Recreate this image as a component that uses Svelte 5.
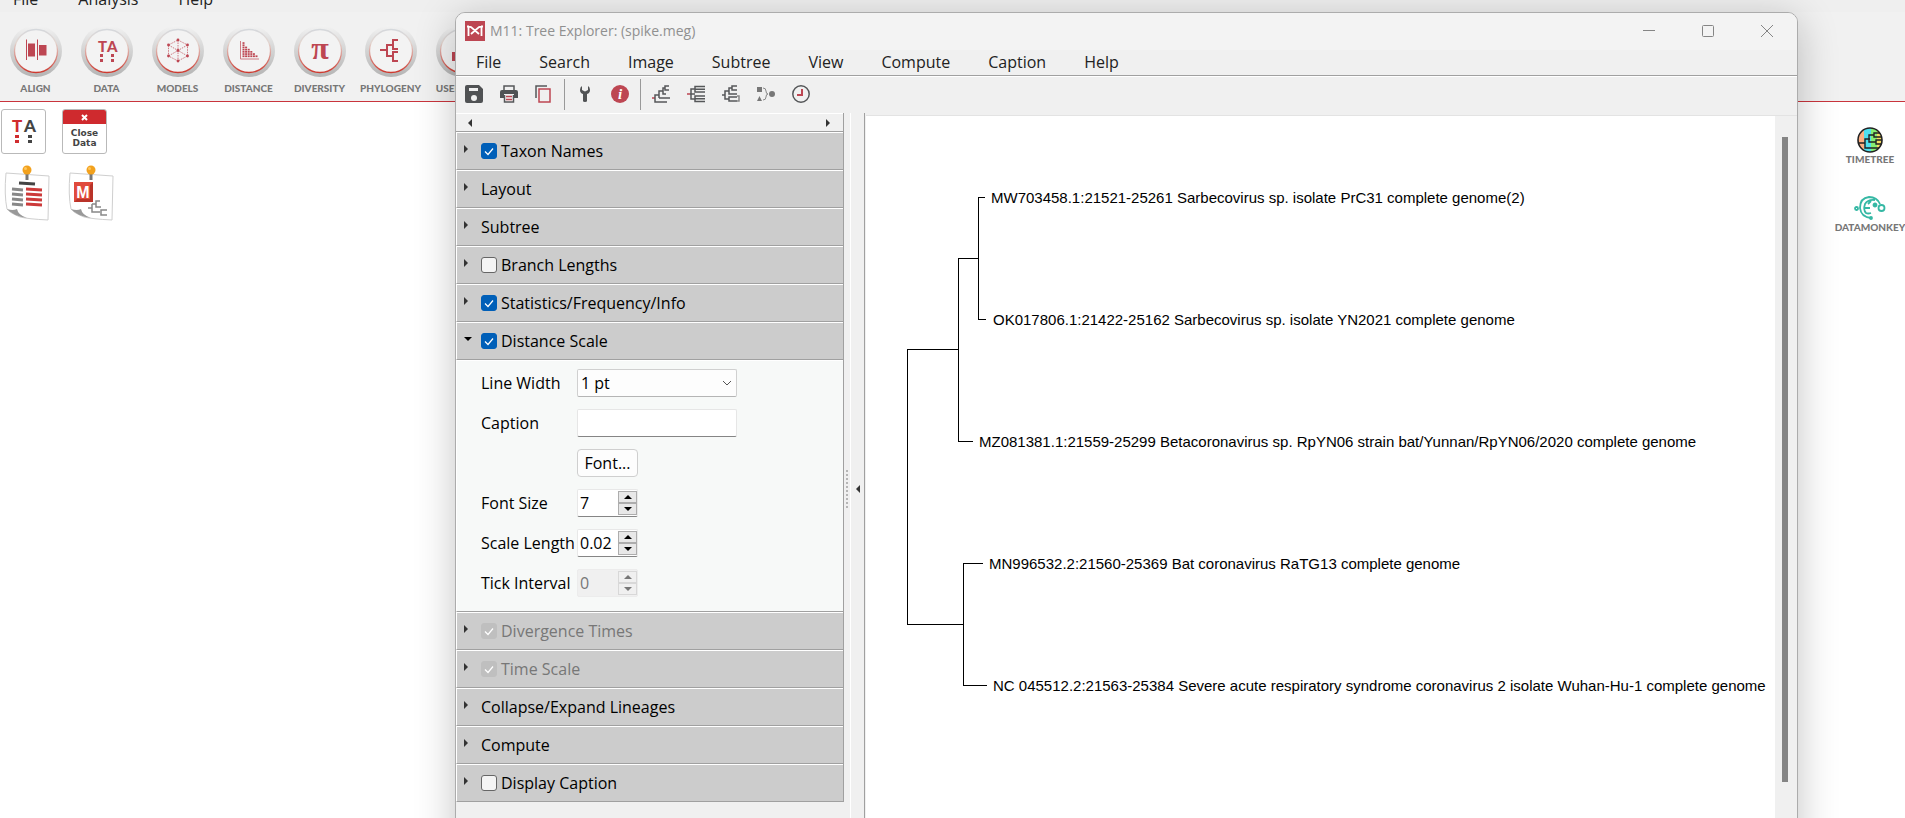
<script lang="ts">
	const mainMenu = ['File', 'Analysis', 'Help'];
	const mainTools = [
		{ id: 'align', label: 'ALIGN' },
		{ id: 'data', label: 'DATA' },
		{ id: 'models', label: 'MODELS' },
		{ id: 'distance', label: 'DISTANCE' },
		{ id: 'diversity', label: 'DIVERSITY' },
		{ id: 'phylogeny', label: 'PHYLOGENY' },
		{ id: 'usertree', label: 'USER TREE' }
	];

	const treeMenu = ['File', 'Search', 'Image', 'Subtree', 'View', 'Compute', 'Caption', 'Help'];
	const treeTools = [
		['save', 'print', 'copy'],
		['settings', 'info'],
		['ladder', 'rectangular', 'collapsed', 'merge', 'clock']
	];

	type Section = {
		title: string;
		checked?: boolean;
		disabled?: boolean;
		open?: boolean;
	};

	let sections = $state<Section[]>([
		{ title: 'Taxon Names', checked: true },
		{ title: 'Layout' },
		{ title: 'Subtree' },
		{ title: 'Branch Lengths', checked: false },
		{ title: 'Statistics/Frequency/Info', checked: true },
		{ title: 'Distance Scale', checked: true, open: true },
		{ title: 'Divergence Times', checked: true, disabled: true },
		{ title: 'Time Scale', checked: true, disabled: true },
		{ title: 'Collapse/Expand Lineages' },
		{ title: 'Compute' },
		{ title: 'Display Caption', checked: false }
	]);

	let caption = $state('');
	let spins = $state([
		{ id: 'font-size', label: 'Font Size', value: 7, step: 1, disabled: false },
		{ id: 'scale-length', label: 'Scale Length', value: 0.02, step: 0.01, disabled: false },
		{ id: 'tick-interval', label: 'Tick Interval', value: 0, step: 1, disabled: true }
	]);

	function nudge(i: number, dir: number) {
		const s = spins[i];
		s.value = Math.max(0, Number((s.value + dir * s.step).toFixed(2)));
	}

	const taxa = [
		{ x: 125, y: 81, name: 'MW703458.1:21521-25261 Sarbecovirus sp. isolate PrC31 complete genome(2)' },
		{ x: 127, y: 203, name: 'OK017806.1:21422-25162 Sarbecovirus sp. isolate YN2021 complete genome' },
		{ x: 113, y: 325, name: 'MZ081381.1:21559-25299 Betacoronavirus sp. RpYN06 strain bat/Yunnan/RpYN06/2020 complete genome' },
		{ x: 123, y: 447, name: 'MN996532.2:21560-25369 Bat coronavirus RaTG13 complete genome' },
		{ x: 127, y: 569, name: 'NC 045512.2:21563-25384 Severe acute respiratory syndrome coronavirus 2 isolate Wuhan-Hu-1 complete genome' }
	];

	const branches = [
		'M119 81H112V203H120',
		'M112 142H92V325H107',
		'M92 233H41V508H97',
		'M117 447H97V569H121'
	];

	// column heights of the distance histogram
	const bars = [7, 5, 4, 3, 2, 1];
</script>

<div class="desktop">
	<nav class="main-menu">
		{#each mainMenu as item}
			<button class="menu-item">{item}</button>
		{/each}
	</nav>

	<div class="main-toolbar">
		{#each mainTools as tool}
			<button class="main-tool">
				<svg width="52" height="52" viewBox="-26 -26 52 52" aria-hidden="true">
					<defs>
						<linearGradient id="ring-{tool.id}" x1="0" y1="0" x2="0" y2="1">
							<stop offset="0" stop-color="#f3f3f3" />
							<stop offset="0.35" stop-color="#dcdcdc" />
							<stop offset="1" stop-color="#b4b4b4" />
						</linearGradient>
						<linearGradient id="rim-{tool.id}" x1="0" y1="0" x2="0" y2="1">
							<stop offset="0" stop-color="#d5d8dc" />
							<stop offset="0.3" stop-color="#e3d6d0" />
							<stop offset="1" stop-color="#cf3a30" />
						</linearGradient>
					</defs>
					<circle r="26" fill="url(#ring-{tool.id})" />
					<circle r="21.5" fill="#f3f3f3" stroke="url(#rim-{tool.id})" stroke-width="1.3" />
					{#if tool.id === 'align'}
						<path d="M-9.500-11.500v20.500M1.500-11.500v20.500" stroke="#bd4652" />
						<path d="M-8-7.500h7v13h-7zM3-6h7.500v10.500h-7.500z" fill="#bd4652" />
					{:else if tool.id === 'data'}
						<text class="ta" x="-9" y="1" fill="#bd4652">T</text>
						<text class="ta" x="0" y="1" fill="#bd4652">A</text>
						<path d="M-7 3h3v3h-3zM-7 8h3v3h-3zM4 3h3v3h-3zM4 8h3v3h-3z" fill="#bd4652" />
					{:else if tool.id === 'models'}
						<path
							d="M0-11L9.500-6V5L0 10L-9.500 5V-6ZM0-11V10M-9.500-6L9.500 5M9.500-6L-9.500 5"
							fill="none"
							stroke="#cf7a82"
							stroke-dasharray="1.500 1"
						/>
						{#each [[0, -11], [9.5, -6], [9.5, 5], [0, 10], [-9.5, 5], [-9.5, -6], [0, -0.5]] as [cx, cy]}
							<circle {cx} {cy} r="1.400" fill="#bd4652" />
						{/each}
					{:else if tool.id === 'distance'}
						<path d="M-8.500-10V8H10" fill="none" stroke="#cf7a82" />
						{#each bars as n, col}
							{#each Array(n) as _, row}
								<rect x={-6.5 + col * 2.6} y={4.4 - row * 2.2} width="2" height="1.700" fill="#bd4652" />
							{/each}
						{/each}
					{:else if tool.id === 'diversity'}
						<text class="pi" y="8" fill="#bd4652">π</text>
					{:else if tool.id === 'phylogeny'}
						<path
							d="M-11-1H-5M-4-7V6M-5-6H2M-5 5H2M7-11H2V-2H7M7 1H2V10H7"
							fill="none"
							stroke="#bd4652"
							stroke-width="2"
						/>
					{:else}
						<path d="M-10 1h4v-9h8v5h8v13h-20z" fill="#bd4652" />
					{/if}
				</svg>
				<span class="caps">{tool.label}</span>
			</button>
		{/each}
	</div>

	<div class="workspace">
		<div class="project">
			<div class="project-row">
				<button class="tile" aria-label="Sequence data">
					<svg width="43" height="43" viewBox="0 0 43 43">
						<text class="ta big" x="10" y="22" fill="#d02c2e">T</text>
						<text class="ta big" x="22" y="22" fill="#444">A</text>
						<path d="M13 25h4v3h-4zM13 30h4v3h-4z" fill="#d02c2e" />
						<path d="M26 25h4v3h-4zM26 30h4v3h-4z" fill="#444" />
					</svg>
				</button>
				<button class="tile close">
					<span class="close-bar">
						<svg width="7" height="7" viewBox="0 0 7 7" aria-hidden="true">
							<path d="M1 1L6 6M6 1L1 6" stroke="#fff" stroke-width="2" />
						</svg>
					</span>
					<span class="close-text">Close<br />Data</span>
				</button>
			</div>
			<div class="project-row notes">
				{#each ['report', 'tree'] as note}
					<button class="note" aria-label="Open {note}">
						<svg width="46" height="57" viewBox="0 0 46 57">
							<path d="M2 8L45 11L44 55Q24 54 16 52Q6 48 3 44Q0 30 2 8Z" fill="#fff" stroke="#cfcfcf" />
							<path d="M3 44Q9 46 13 44Q14 50 23 53Q9 51 3 44Z" fill="#999" />
							<path d="M23 8V15" stroke="#777" stroke-width="3" />
							<circle cx="23" cy="5" r="4.500" fill="#f2a11d" />
							<circle cx="21.500" cy="3.500" r="1.500" fill="#ffc65c" />
							{#if note === 'report'}
								<path d="M15 18L31 19" stroke="#444" stroke-width="3" />
								<path d="M8 24l11 1M8 29l11 1M8 34l11 1M8 39l11 1" stroke="#888" stroke-width="3" />
								<path d="M22 24l16 1M22 29l16 1M22 34l16 1M22 39l16 1" stroke="#cc3a3a" stroke-width="3" />
							{:else}
								<rect x="6" y="17" width="19" height="20" fill="#e04a3c" />
								<path d="M25 17v20h-19l3-3h13v-14z" fill="#b93329" />
								<text class="m" x="15" y="33" fill="#fff">M</text>
								<path d="M20 43h4M24 39v8h8M24 39h4M32 36h-4v6h5M39 45h-6v5h6" fill="none" stroke="#888" stroke-width="1.500" />
							{/if}
						</svg>
					</button>
				{/each}
			</div>
		</div>

		<div class="links">
			<a class="ext" href="#timetree">
				<svg width="32" height="26" viewBox="-16 -13 32 26" aria-hidden="true">
					<clipPath id="globe"><circle r="12" /></clipPath>
					<g clip-path="url(#globe)">
						<path d="M-13-13h7v26h-7z" fill="#fdb083" />
						<path d="M-6-13h7v26h-7z" fill="#4fe0f0" />
						<path d="M1-13h6v26h-6z" fill="#86ee72" />
						<path d="M7-13h6v26h-6z" fill="#f6dd62" />
						<path d="M-12 3H-5M0-1H-5V8H12M4-5H-1V2H6M10-7H4V-3H12M12 0H6V4H12" fill="none" stroke="#222" stroke-width="1.400" />
					</g>
					<circle r="12" fill="none" stroke="#222" stroke-width="1.600" />
				</svg>
				<span class="caps">TIMETREE</span>
			</a>
			<a class="ext" href="#datamonkey">
				<svg width="32" height="26" viewBox="-16 -13 32 26" aria-hidden="true" fill="none" stroke="#35b8a4" stroke-width="1.800">
					<path d="M10-4Q7-11-1-11Q-10-10-10 0Q-9 9 1 10" />
					<path d="M5-8Q-2-9-5-4Q-7 2-4 5Q-2 6 1 5M-6 0H0M-2-4L1-7" />
					<circle cx="-13.500" cy="0.500" r="1.500" />
					<circle cx="11.500" cy="0" r="3" />
					<circle cx="5" cy="-3" r="1.500" fill="#35b8a4" />
					<circle cx="1" cy="10" r="1" />
				</svg>
				<span class="caps">DATAMONKEY</span>
			</a>
		</div>
	</div>

	<div class="window">
		<header class="titlebar">
			<svg width="20" height="20" viewBox="0 0 20 20" aria-hidden="true">
				<rect width="20" height="20" fill="#bd4652" />
				<path d="M2 5.500H4M3.500 15V5.500L6 6L14 13M6 13L14 6L16.500 5.500V15M16 5.500H18" fill="none" stroke="#fff" stroke-width="1.800" />
			</svg>
			<h1>M11: Tree Explorer: (spike.meg)</h1>
			<div class="controls">
				<button aria-label="Minimize">
					<svg width="14" height="14" viewBox="0 0 14 14"><path d="M1 6.500H13" /></svg>
				</button>
				<button aria-label="Maximize">
					<svg width="14" height="14" viewBox="0 0 14 14"><rect x="1.500" y="1.500" width="11" height="11" rx="1" /></svg>
				</button>
				<button aria-label="Close">
					<svg width="14" height="14" viewBox="0 0 14 14"><path d="M1 1L13 13M13 1L1 13" /></svg>
				</button>
			</div>
		</header>

		<nav class="tree-menu">
			{#each treeMenu as item}
				<button class="menu-item">{item}</button>
			{/each}
		</nav>

		<div class="tree-toolbar">
			{#each treeTools as group, g}
				{#if g > 0}
					<span class="sep"></span>
				{/if}
				{#each group as icon}
					<button class="tree-tool" aria-label={icon}>
						<svg width="18" height="18" viewBox="0 0 18 18" fill="none" stroke="#555759" stroke-width="1.500">
							{#if icon === 'save'}
								<path d="M2 0H14L18 4V16Q18 18 16 18H2Q0 18 0 16V2Q0 0 2 0Z" fill="#505254" stroke="none" />
								<path d="M4 3h9v3h-9z" fill="#f0f0f0" stroke="none" />
								<circle cx="9" cy="13" r="3" fill="#f0f0f0" stroke="none" />
							{:else if icon === 'print'}
								<path d="M4 5V1H14V5" />
								<path d="M2 5H16Q18 5 18 7V13H14V9H4V13H0V7Q0 5 2 5Z" fill="#505254" stroke="none" />
								<path d="M4.500 10V17H13.500V10" />
								<path d="M6 11.500H12M6 14.500H12" stroke="#bd4652" />
							{:else if icon === 'copy'}
								<path d="M1 13V1H12" />
								<rect x="4" y="4" width="11" height="13" stroke="#bd4652" />
							{:else if icon === 'settings'}
								<path
									d="M6 1Q4 2 4 5Q4 8 7 9V16Q7 17 9 17Q11 17 11 16V9Q14 8 14 5Q14 2 12 1V5L9 6.500L6 5Z"
									fill="#505254"
									stroke="none"
								/>
							{:else if icon === 'info'}
								<circle cx="9" cy="9" r="9" fill="#bd4652" stroke="none" />
								<text class="i" x="9" y="14" fill="#fff" stroke="none">i</text>
							{:else if icon === 'ladder'}
								<path d="M0 13H3" stroke="#bd4652" />
								<path d="M18 13H7M15 17H3V10H7M7 13V6H11M14 9H11V3H13M17 1H13V5H17" />
							{:else if icon === 'rectangular'}
								<path d="M0 9H3" stroke="#bd4652" />
								<path d="M3 9H8M8 4H4V14H8M18 1.500H8V7H18M18 4.300H8M18 11H8V16.500H18M18 13.700H8" />
							{:else if icon === 'collapsed'}
								<path d="M0 10H3M7 6H3V14H7M10 3H7V9H15M15 1H10V5H15M10 12H7V16H15M10 12H15" />
								<path d="M15 11H17V16H15" stroke="#888" />
							{:else if icon === 'merge'}
								<path d="M0 2h5v5h-5zM0 16l2.500-5l2.500 5z" fill="#777" stroke="none" />
								<path d="M6 3Q9 3 9 6T11 9Q9 9 9 12T6 15" stroke="#888" stroke-width="1" />
								<circle cx="15" cy="9" r="3" fill="#777" stroke="none" />
							{:else}
								<circle cx="9" cy="9" r="8.200" />
								<path d="M10 4V10H5" stroke="#bd4652" stroke-width="2" />
							{/if}
						</svg>
					</button>
				{/each}
			{/each}
		</div>

		<div class="body">
			<aside class="side">
				<div class="accordion">
					<div class="pager">
						<button aria-label="Previous"><i class="tri left"></i></button>
						<button aria-label="Next"><i class="tri right"></i></button>
					</div>
					{#each sections as section}
						<section>
							<div class="head">
								<button
									class="toggle"
									aria-label="Toggle {section.title}"
									aria-expanded={!!section.open}
									onclick={() => (section.open = !section.open)}
								>
									<i class="tri {section.open ? 'down' : 'right'}"></i>
								</button>
								{#if section.checked === undefined}
									<span>{section.title}</span>
								{:else}
									<label class:off={section.disabled}>
										<span class="check">
											<input type="checkbox" bind:checked={section.checked} disabled={section.disabled} />
											{#if section.checked}
												<svg width="16" height="16" viewBox="0 0 16 16" aria-hidden="true">
													<path d="M4 8.500L7 11.500L12 5.500" fill="none" stroke="#fff" stroke-width="1.200" />
												</svg>
											{/if}
										</span>
										{section.title}
									</label>
								{/if}
							</div>
							{#if section.open && section.title === 'Distance Scale'}
								<div class="form">
									<label for="line-width">Line Width</label>
									<div class="select">
										<select id="line-width">
											<option>1 pt</option>
											<option>2 pt</option>
											<option>3 pt</option>
										</select>
										<svg width="10" height="6" viewBox="0 0 10 6" aria-hidden="true">
											<path d="M1 1L5 5L9 1" fill="none" stroke="#555" />
										</svg>
									</div>
									<label for="caption">Caption</label>
									<input id="caption" class="field" type="text" bind:value={caption} />
									<button class="font-btn">Font...</button>
									{#each spins as spin, i}
										<label for={spin.id}>{spin.label}</label>
										<div class="spin" class:off={spin.disabled}>
											<input id={spin.id} type="number" step={spin.step} bind:value={spin.value} disabled={spin.disabled} />
											<div class="steps">
												<button aria-label="Increase {spin.label}" disabled={spin.disabled} onclick={() => nudge(i, 1)}>
													<i class="tri up"></i>
												</button>
												<button aria-label="Decrease {spin.label}" disabled={spin.disabled} onclick={() => nudge(i, -1)}>
													<i class="tri down"></i>
												</button>
											</div>
										</div>
									{/each}
								</div>
							{/if}
						</section>
					{/each}
				</div>
			</aside>

			<div class="splitter"><span class="grip"></span></div>
			<button class="collapse" aria-label="Hide side panel"><i class="tri left"></i></button>

			<main class="canvas">
				<svg class="tree" role="img" aria-label="Phylogenetic tree">
					{#each branches as d}
						<path {d} />
					{/each}
					{#each taxa as taxon}
						<text x={taxon.x} y={taxon.y + 6}>{taxon.name}</text>
					{/each}
				</svg>
				<div class="scroll"><span class="thumb"></span></div>
			</main>
		</div>
	</div>
</div>

<style>
	:global(body) {
		margin: 0;
		overflow: hidden;
	}

	.desktop {
		position: relative;
		display: flex;
		flex-direction: column;
		height: 100vh;
		overflow: hidden;
		background: #fff;
		color: #000;
		font-family: 'Open Sans', 'Noto Sans', sans-serif;
		font-size: 16px;
		line-height: 22px;
	}

	button {
		margin: 0;
		padding: 0;
		border: 0;
		background: none;
		color: inherit;
		font: inherit;
	}

	svg {
		display: block;
		flex-shrink: 0;
	}

	.main-menu {
		box-sizing: border-box;
		display: flex;
		align-items: flex-end;
		gap: 40px;
		height: 12px;
		padding: 0 0 2px 13px;
		background: #efefef;
		color: #222;
	}

	.main-toolbar {
		display: flex;
		height: 76px;
		padding-top: 13px;
		background: #f1f1f1;
		border-bottom: 1px solid #c9343c;
	}

	.main-tool {
		display: flex;
		flex-direction: column;
		align-items: center;
		gap: 5px;
		width: 71px;
		white-space: nowrap;
	}

	.caps {
		font-family: Lato, sans-serif;
		font-size: 10px;
		font-weight: 900;
		line-height: 12px;
		color: #777;
	}

	.ta {
		font-family: Lato, sans-serif;
		font-size: 15px;
		font-weight: 900;
	}

	.ta.big {
		font-size: 17px;
	}

	.pi {
		font-family: 'Liberation Serif', serif;
		font-size: 32px;
		font-weight: 700;
		text-anchor: middle;
	}

	.m {
		font-family: 'Liberation Sans', sans-serif;
		font-size: 16px;
		font-weight: 700;
		text-anchor: middle;
	}

	.i {
		font-family: 'Liberation Serif', serif;
		font-size: 15px;
		font-style: italic;
		font-weight: 700;
		text-anchor: middle;
	}

	.workspace {
		display: flex;
		flex: 1;
		justify-content: space-between;
	}

	.project {
		padding: 7px 1px;
	}

	.project-row {
		display: flex;
		gap: 16px;
	}

	.project-row.notes {
		gap: 18px;
		padding: 11px 3px;
	}

	.tile {
		box-sizing: border-box;
		width: 45px;
		height: 45px;
		border: 1px solid #b9b9b9;
		border-radius: 3px;
		background: #fff;
		overflow: hidden;
	}

	.tile.close {
		display: flex;
		flex-direction: column;
	}

	.close-bar {
		display: flex;
		align-items: center;
		justify-content: center;
		width: 100%;
		height: 14px;
		background: #cf2a2e;
	}

	.close-text {
		width: 100%;
		padding-top: 4px;
		font-family: 'DejaVu Sans', sans-serif;
		font-size: 9px;
		line-height: 10px;
		font-weight: 700;
		color: #444;
	}

	.links {
		display: flex;
		flex-direction: column;
		gap: 30px;
		width: 70px;
		padding-top: 25px;
	}

	.ext {
		display: flex;
		flex-direction: column;
		align-items: center;
		text-decoration: none;
	}

	.window {
		position: absolute;
		top: 12px;
		right: 107px;
		bottom: -48px;
		left: 455px;
		display: flex;
		flex-direction: column;
		border: 1px solid #acacac;
		border-radius: 10px 10px 0 0;
		background: #f0f0f0;
		box-shadow: 0 8px 40px rgba(0, 0, 0, 0.24);
		overflow: hidden;
	}

	.titlebar {
		box-sizing: border-box;
		display: flex;
		align-items: center;
		gap: 5px;
		height: 37px;
		padding: 0 1px 2px 9px;
		background: #f3f3f3;
		color: #909090;
	}

	h1 {
		flex: 1;
		margin: 0;
		font-size: 14px;
		font-weight: 400;
	}

	.controls {
		display: flex;
	}

	.controls button {
		display: flex;
		align-items: center;
		justify-content: center;
		width: 59px;
		height: 34px;
	}

	.controls svg {
		fill: none;
		stroke: #858585;
	}

	.tree-menu {
		box-sizing: border-box;
		display: flex;
		align-items: center;
		gap: 38px;
		height: 26px;
		padding: 0 0 2px 20px;
		border-bottom: 1px solid #a0a0a0;
		color: #222;
	}

	.tree-toolbar {
		box-sizing: border-box;
		display: flex;
		align-items: center;
		height: 37px;
		padding-bottom: 2px;
		border-top: 1px solid #fff;
	}

	.tree-tool {
		display: flex;
		justify-content: center;
		width: 35px;
	}

	.sep {
		width: 1px;
		height: 31px;
		margin: 0 2px 0 3px;
		background: #999;
	}

	.body {
		display: flex;
		flex: 1;
		min-height: 0;
	}

	.side {
		width: 388px;
	}

	.accordion {
		border-right: 1px solid #a0a0a0;
	}

	.pager {
		display: flex;
		justify-content: space-between;
		align-items: center;
		height: 17px;
		padding: 0 13px 0 12px;
		border-top: 1px solid #fff;
		border-bottom: 1px solid #a0a0a0;
	}

	.tri {
		display: block;
		width: 0;
		height: 0;
		border: 4px solid transparent;
	}

	.tri.left {
		border-left-width: 0;
		border-right-color: #333;
	}

	.tri.right {
		border-right-width: 0;
		border-left-color: #333;
	}

	.tri.up {
		border-top-width: 0;
		border-bottom-color: currentColor;
	}

	.tri.down {
		border-bottom-width: 0;
		border-top-color: currentColor;
	}

	.head {
		display: flex;
		align-items: center;
		height: 36px;
		border-top: 1px solid #fff;
		border-left: 1px solid #fff;
		border-bottom: 1px solid #a0a0a0;
		background: #ccc;
	}

	.toggle {
		width: 24px;
		padding: 0 7px 4px;
	}

	.head label {
		display: flex;
		align-items: center;
		gap: 4px;
	}

	.head label.off {
		color: #777;
	}

	.check {
		display: grid;
	}

	.check > * {
		grid-area: 1 / 1;
	}

	.check svg {
		pointer-events: none;
	}

	.check input {
		appearance: none;
		box-sizing: border-box;
		width: 16px;
		height: 16px;
		margin: 0;
		border: 1px solid #666;
		border-radius: 3px;
		background: #f4f4f4;
	}

	.check input:checked {
		border-color: #005fb8;
		background: #005fb8;
	}

	.check input:disabled {
		border-color: #bfbfbf;
		background: #bfbfbf;
	}

	.form {
		display: grid;
		grid-template-columns: 96px 160px;
		grid-auto-rows: 28px;
		row-gap: 12px;
		align-items: center;
		padding: 8px 0 14px 24px;
		border-top: 1px solid #fff;
		border-left: 1px solid #fff;
		border-bottom: 1px solid #a0a0a0;
		background: #f7f9f8;
	}

	.form label {
		white-space: nowrap;
	}

	.select {
		display: grid;
		align-items: center;
	}

	.select > * {
		grid-area: 1 / 1;
	}

	.select svg {
		justify-self: end;
		margin-right: 5px;
		pointer-events: none;
	}

	select,
	.field {
		appearance: none;
		box-sizing: border-box;
		width: 160px;
		height: 28px;
		padding: 0 3px;
		border: 1px solid #d0d0d0;
		border-bottom-color: #b5b5b5;
		border-radius: 2px;
		background: #fdfdfd;
		color: inherit;
		font: inherit;
	}

	.field {
		border-color: #e6e6e6;
		border-bottom-color: #858585;
		background: #fff;
	}

	.font-btn {
		grid-column: 2;
		box-sizing: border-box;
		width: 61px;
		height: 28px;
		border: 1px solid #cfcfcf;
		border-radius: 4px;
		background: #fdfdfd;
	}

	.spin {
		display: flex;
		box-sizing: border-box;
		width: 61px;
		height: 28px;
		border: 1px solid #e8e8e8;
		border-bottom-color: #858585;
		border-radius: 2px;
		background: #fff;
	}

	.spin input {
		appearance: textfield;
		box-sizing: border-box;
		width: 40px;
		padding: 0 0 0 2px;
		border: 0;
		background: none;
		color: inherit;
		font: inherit;
	}

	.spin input::-webkit-inner-spin-button {
		display: none;
	}

	.steps {
		display: flex;
		flex-direction: column;
		width: 19px;
		padding: 1px 0;
	}

	.steps button {
		display: flex;
		flex: 1;
		align-items: center;
		justify-content: center;
		border: 1px solid #adadad;
		background: #e8e8e8;
	}

	.spin.off {
		border-color: #ececec;
		background: #f0f0f0;
		color: #777;
	}

	.spin.off .steps button {
		border-color: #d8d8d8;
		background: #f0f0f0;
	}

	.splitter {
		display: flex;
		align-items: center;
		justify-content: center;
		width: 6px;
	}

	.grip {
		width: 0;
		height: 38px;
		border-left: 2px dotted #b5b5b5;
	}

	.collapse {
		display: flex;
		align-items: center;
		justify-content: center;
		box-sizing: border-box;
		width: 15px;
		border-left: 1px solid #fff;
		border-right: 1px solid #a0a0a0;
	}

	.canvas {
		display: flex;
		flex: 1;
		min-width: 0;
		margin: 2px 0 0 1px;
		border-top: 1px solid #e3e3e3;
		background: #fff;
	}

	.tree {
		flex: 1;
		min-width: 0;
		height: 100%;
	}

	.tree path {
		fill: none;
		stroke: #000;
		shape-rendering: crispEdges;
	}

	.tree text {
		font-family: 'Liberation Sans', Arial, sans-serif;
		font-size: 15px;
	}

	.scroll {
		display: flex;
		justify-content: center;
		box-sizing: border-box;
		width: 22px;
		padding: 21px 2px 83px 0;
		background: #f0f0f0;
	}

	.thumb {
		width: 6px;
		background: #858585;
	}
</style>
